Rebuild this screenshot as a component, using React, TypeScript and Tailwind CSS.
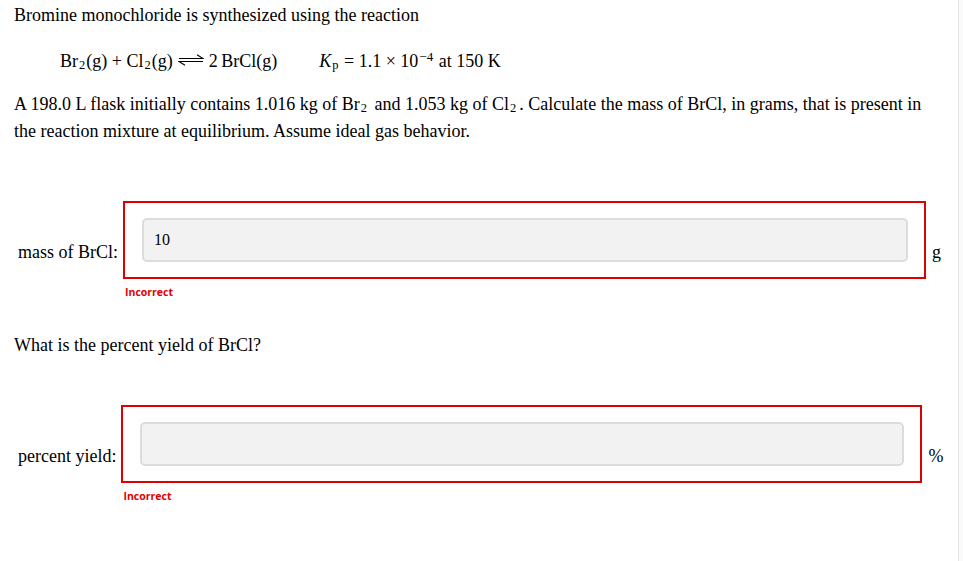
import React from "react";

const serif = { fontFamily: '"Liberation Serif", "Times New Roman", serif' };

function Sub({ children, tight }: { children: React.ReactNode; tight?: boolean }) {
  return (
    <sub className={`text-[12.5px] leading-none relative top-[2px] pl-[1px] ${tight ? "pr-[1px]" : "pr-[3px]"}`}>
      {children}
    </sub>
  );
}

function EqArrow() {
  return (
    <svg width="26" height="12" viewBox="0 0 26 12" className="inline-block mx-[5px] align-[1px]">
      <path d="M1 4.5 H25 L19 0.8" fill="none" stroke="black" strokeWidth="1.1" />
      <path d="M25 7.5 H1 L7 11.2" fill="none" stroke="black" strokeWidth="1.1" />
    </svg>
  );
}

function AnswerRow({
  label,
  value,
  unit,
  boxWidth,
}: {
  label: string;
  value: string;
  unit: string;
  boxWidth: string;
}) {
  return (
    <div className="flex items-start pl-[18px]">
      <div className="mt-[39px] text-[18px] leading-[24px] text-black">{label}</div>
      <div className="ml-[5px] flex flex-col">
        <div className={`${boxWidth} h-[78px] border-2 border-[#dd0000] pt-[15px] pl-[17px] pr-[16px]`}>
          <input
            readOnly
            value={value}
            className="w-full h-[44px] bg-[#f2f2f2] border-2 border-[#dcdcdc] rounded-[5px] px-[10px] text-[16px] text-black outline-none"
            style={serif}
          />
        </div>
        <div
          className="mt-[6px] ml-[2px] text-[10.5px] leading-[15px] font-bold text-[#e00000]"
          style={{ fontFamily: '"Open Sans", "Noto Sans", sans-serif' }}
        >
          Incorrect
        </div>
      </div>
      <div className="mt-[39px] ml-[6px] text-[18px] leading-[24px] text-black">{unit}</div>
    </div>
  );
}

export default function App() {
  return (
    <div className="flex w-full h-[561px] bg-white overflow-hidden" style={serif}>
      <main className="flex-1 text-black">
        <p className="pt-[3px] px-[14px] text-[18px] leading-[24px]">
          Bromine monochloride is synthesized using the reaction
        </p>

        <div className="mt-[22px] pl-[60px] flex text-[18px] leading-[24px]">
          <span>
            Br<Sub tight>2</Sub>(g) + Cl<Sub tight>2</Sub>(g)
            <EqArrow />2&#8201;BrCl(g)
          </span>
          <span className="ml-[42px]">
            <i>K</i>
            <Sub tight>p</Sub> = 1.1 × 10
            <sup className="text-[13px] leading-none pl-[1px] pr-[1px]">−4</sup> at 150 K
          </span>
        </div>

        <p className="mt-[18px] pl-[14px] pr-[26px] text-[18px] leading-[27px]">
          A 198.0 L flask initially contains 1.016 kg of Br<Sub>2</Sub> and 1.053 kg of Cl
          <Sub>2</Sub>. Calculate the mass of BrCl, in grams, that is present in the reaction mixture at
          equilibrium. Assume ideal gas behavior.
        </p>

        <div className="mt-[56px]">
          <AnswerRow label="mass of BrCl:" value="10" unit="g" boxWidth="w-[803px]" />
        </div>

        <p className="mt-[33px] px-[14px] text-[18px] leading-[24px]">What is the percent yield of BrCl?</p>

        <div className="mt-[48px]">
          <AnswerRow label="percent yield:" value="" unit="%" boxWidth="w-[801px]" />
        </div>
      </main>
      <aside className="w-[5px] border-l border-[#e2e2e2] bg-[#fafafa]" />
    </div>
  );
}
